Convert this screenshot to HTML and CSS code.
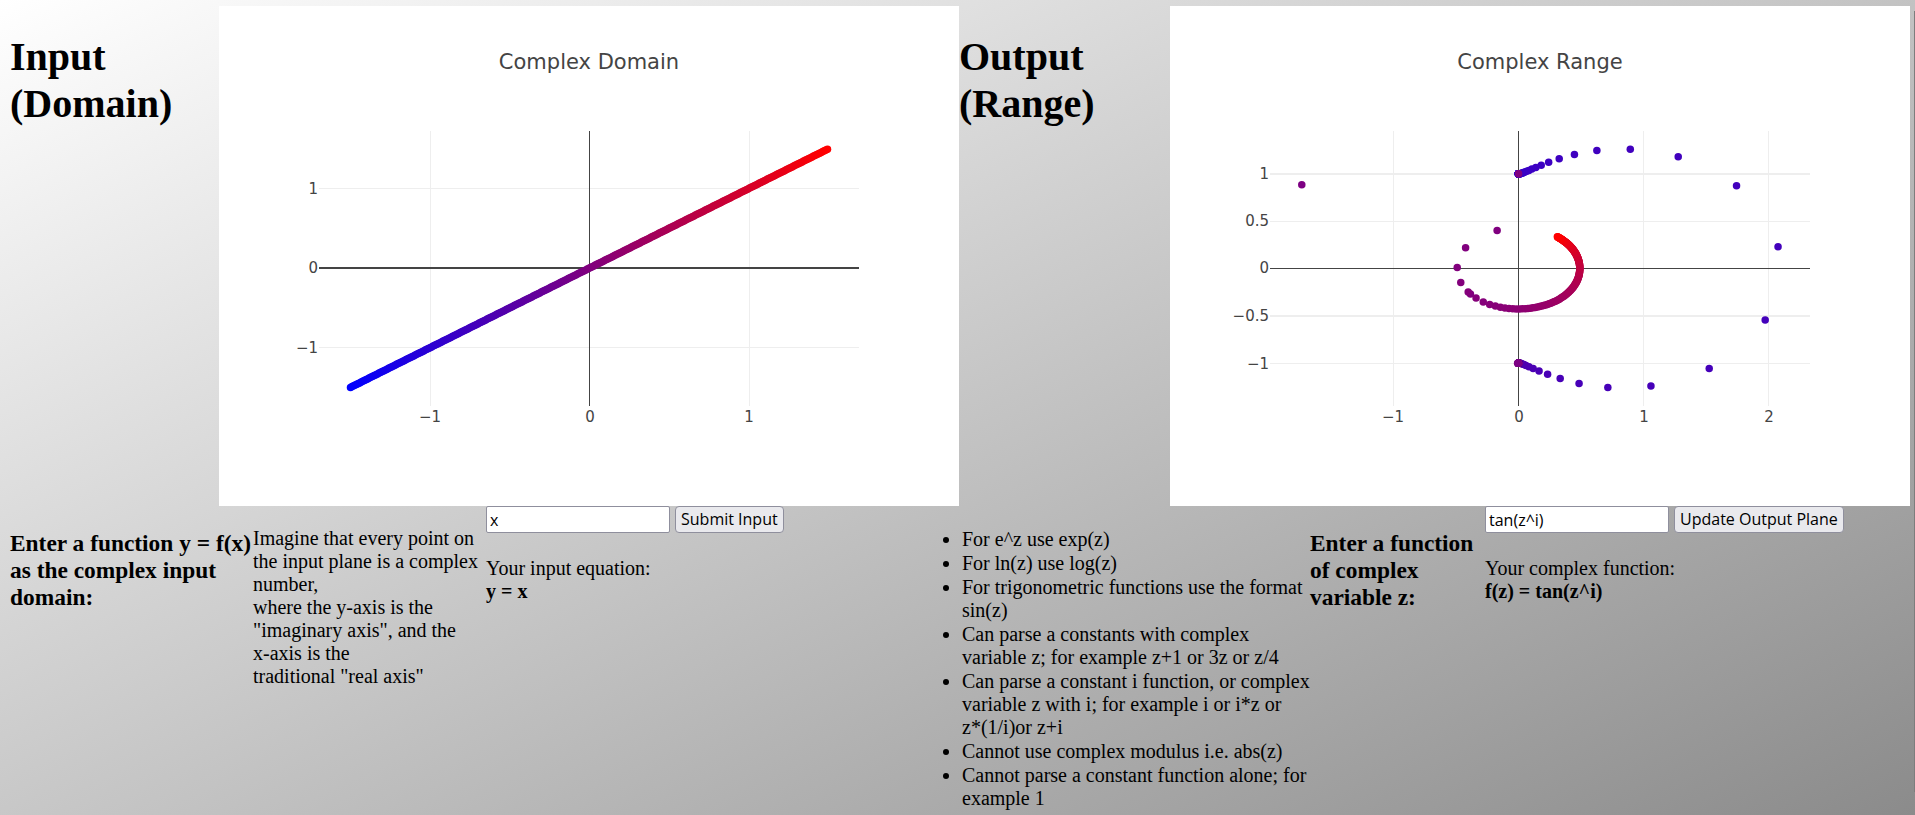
FILE: index.html
```html
<!DOCTYPE html>
<html lang="en">
<head>
<meta charset="utf-8">
<title>Complex Function Plotter</title>
<link rel="stylesheet" href="styles.css">
</head>
<body>
<main>
  <section class="planes">
    <h1>Input (Domain)</h1>
    <svg class="plot" viewBox="0 0 740 500" role="img" aria-label="Complex Domain">
      <g class="grid">
        <path d="M211.5 125V400M530.5 125V400M100 182.5H640M100 341.5H640"/>
      </g>
      <g class="axis">
        <path d="M370.5 125V400"/>
        <path class="thick" d="M100 262H640"/>
      </g>
      <g id="domain-points"></g>
      <text class="title" x="370" y="63">Complex Domain</text>
      <g class="ticks-x">
        <text x="211" y="416">−1</text><text x="371" y="416">0</text><text x="530" y="416">1</text>
      </g>
      <g class="ticks-y">
        <text x="99" y="188">1</text><text x="99" y="267">0</text><text x="99" y="347">−1</text>
      </g>
    </svg>
    <h1>Output (Range)</h1>
    <svg class="plot" viewBox="0 0 740 500" role="img" aria-label="Complex Range">
      <g class="grid">
        <path d="M223.5 125V400M473.5 125V400M598.5 125V400M100 215.5H640M100 357.5H640"/>
        <path class="thick" d="M100 168H640M100 310H640"/>
      </g>
      <g class="axis">
        <path d="M348.5 125V400M100 262.5H640"/>
      </g>
      <g id="range-points"></g>
      <text class="title" x="370" y="63">Complex Range</text>
      <g class="ticks-x">
        <text x="223" y="416">−1</text><text x="349" y="416">0</text><text x="474" y="416">1</text><text x="599" y="416">2</text>
      </g>
      <g class="ticks-y">
        <text x="99" y="173">1</text><text x="99" y="220">0.5</text><text x="99" y="267">0</text><text x="99" y="315">−0.5</text><text x="99" y="363">−1</text>
      </g>
    </svg>
  </section>

  <section class="controls">
    <h3><label for="domain-input">Enter a function y = f(x) as the complex input domain:</label></h3>
    <p>Imagine that every point on the input plane is a complex number,<br>where the y-axis is the "imaginary axis", and the <span class="term">x-axis</span> is the<br>traditional "real axis"</p>
    <div>
      <form>
        <input id="domain-input" type="text" value="x">
        <button type="button">Submit Input</button>
      </form>
      <p>Your input equation:<br><b>y = x</b></p>
    </div>
    <ul>
      <li>For e^z use exp(z)</li>
      <li>For ln(z) use log(z)</li>
      <li>For trigonometric functions use the format sin(z)</li>
      <li>Can parse a constants with complex variable z; for example z+1 or 3z or z/4</li>
      <li>Can parse a constant i function, or complex variable z with i; for example i or i*z or <span class="term">z*(1/i)or</span> z+i</li>
      <li>Cannot use complex modulus i.e. abs(z)</li>
      <li>Cannot parse a constant function alone; for example 1</li>
    </ul>
    <h3><label for="range-input">Enter a function of complex variable z:</label></h3>
    <div>
      <form>
        <input id="range-input" type="text" value="tan(z^i)">
        <button type="button">Update Output Plane</button>
      </form>
      <p>Your complex function:<br><b>f(z) = tan(z^i)</b></p>
    </div>
  </section>
</main>
<div class="scroll-thumb" aria-hidden="true"></div>
<script src="plot.js"></script>
</body>
</html>
```
FILE: styles.css
```css
body {
  margin: 0;
  font-family: "Liberation Serif", "Times New Roman", serif;
  font-size: 20px;
  line-height: 23px;
  color: #000;
  background: linear-gradient(155deg, #fff, #8a8a8a);
}

html {
  scrollbar-width: none;
}

main {
  padding: 6px 0 0 10px;
}

.planes {
  display: grid;
  grid-template-columns: 209fr 740fr 211fr 740fr;
  align-items: start;
  padding-right: 5px;
}

h1 {
  margin: 27px 0;
  font-size: 40px;
  line-height: 47px;
}

.plot {
  display: block;
  width: 100%;
  height: auto;
  background: #fff;
  font-family: "DejaVu Sans", Verdana, sans-serif;
  font-size: 15px;
  fill: #444;
}

.grid,
.axis {
  fill: none;
  stroke: #eee;
  stroke-width: 1px;
  shape-rendering: crispEdges;
}

.axis {
  stroke: #444;
}

.thick {
  stroke-width: 2px;
}

.title {
  font-size: 21px;
  text-anchor: middle;
}

.ticks-x {
  text-anchor: middle;
}

.ticks-y {
  text-anchor: end;
}

.controls {
  display: grid;
  grid-template-columns: 243fr 233fr 436fr 388fr 175fr 430fr;
  align-items: start;
}

h3 {
  margin: 24px 0;
  line-height: 27px;
}

p,
ul {
  margin: 21px 0;
}

ul {
  padding-left: 40px;
}

li {
  padding-top: 1px;
}

.term {
  white-space: nowrap;
}

form {
  display: flex;
  gap: 5px;
  margin-bottom: 24px;
}

input,
button {
  box-sizing: border-box;
  height: 27px;
  border: 1px solid #8f8f9d;
  font-family: "Open Sans", "Noto Sans", sans-serif;
  font-size: 16px;
  line-height: 23px;
  color: #000;
}

input {
  width: 184px;
  padding: 0 3px;
  border-radius: 2px;
  background: #fff;
}

button {
  padding: 0 5px;
  border-radius: 4px;
  background: #e9e9ed;
  white-space: nowrap;
}

.scroll-thumb {
  position: fixed;
  top: 11px;
  right: 0;
  bottom: 23px;
  width: 1px;
  background: #7d7d7d;
}
```
FILE: plot.js
```js
const SVG_NS = "http://www.w3.org/2000/svg";
const STEPS = 300;

function addPoint(group, x, y, share) {
  const dot = document.createElementNS(SVG_NS, "circle");
  const red = Math.round(255 * share);
  dot.setAttribute("cx", x.toFixed(2));
  dot.setAttribute("cy", y.toFixed(2));
  dot.setAttribute("r", "3.75");
  dot.setAttribute("fill", `rgb(${red},0,${255 - red})`);
  group.appendChild(dot);
}

// z^i = exp(i * Log z)
function powI(re, im) {
  const scale = Math.exp(-Math.atan2(im, re));
  const angle = Math.log(Math.hypot(re, im));
  return [scale * Math.cos(angle), scale * Math.sin(angle)];
}

function tan(re, im) {
  const d = Math.cos(2 * re) + Math.cosh(2 * im);
  return [Math.sin(2 * re) / d, Math.sinh(2 * im) / d];
}

const domain = document.getElementById("domain-points");
const range = document.getElementById("range-points");

for (let i = 0; i <= STEPS; i++) {
  // A tiny offset keeps the logarithm finite at the origin.
  const t = i === STEPS / 2 ? 1.2e-15 : (i - STEPS / 2) / 100;
  const share = i / STEPS;
  addPoint(domain, 370 + 159 * t, 262.3 - 79.4 * t, share);
  const [u, v] = tan(...powI(t, t));
  addPoint(range, 348.5 + 125 * u, 262.5 - 94.7 * v, share);
}
```
